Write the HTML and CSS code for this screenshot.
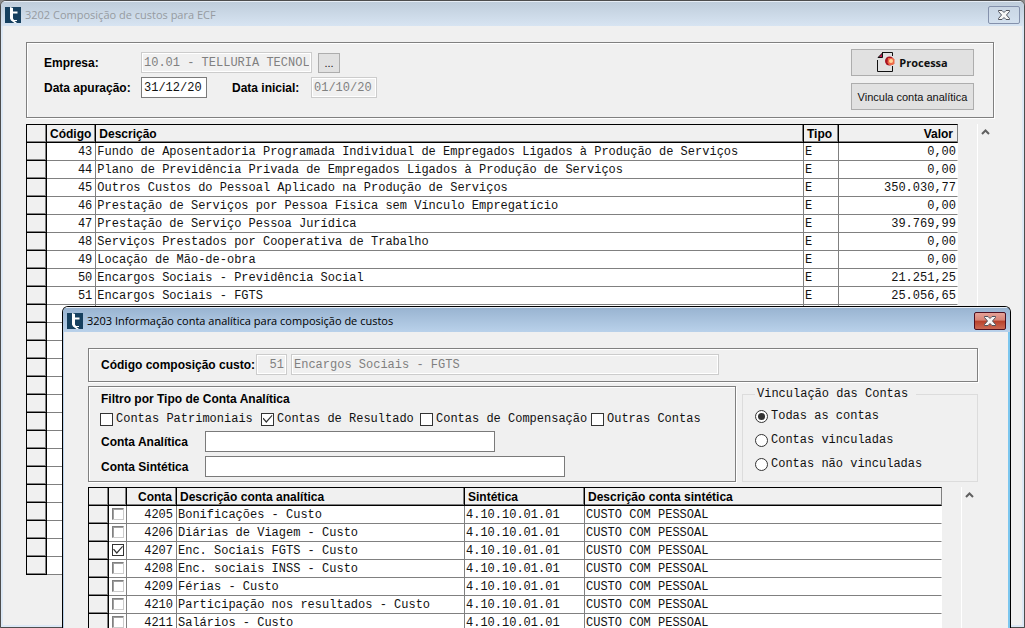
FILE: index.html
```html
<!DOCTYPE html>
<html lang="pt-BR">
<head>
<meta charset="utf-8">
<title>3202 Composição de custos para ECF</title>
<link rel="stylesheet" href="styles.css">
</head>
<body>
<svg class="defs" aria-hidden="true">
  <symbol id="logo" viewBox="0 0 16 16">
    <rect width="16" height="16" fill="#16405f"/>
    <path d="M5 0l3 1v3.500h4.500v2H8v5l1 1.500h3v1H9.500l2.500 2H9.500L6 13.500l-1-2z" fill="#fff"/>
  </symbol>
  <symbol id="close" viewBox="0 0 12 10">
    <path d="M.5.5h3.500L6 2.500 8 .5h3.500v1L8.500 5l3 3.500v1H8L6 7.500 4 9.500H.5v-1L3.500 5 .5 1.500z" fill="#f6f6f6" stroke="#50535c"/>
  </symbol>
  <symbol id="up" viewBox="0 0 9 6">
    <path d="M1 5 4.500 1.500 8 5" fill="none" stroke="#606060" stroke-width="2"/>
  </symbol>
</svg>
<main class="window">
  <header class="titlebar">
    <svg class="logo"><use href="#logo"/></svg>
    <h1 class="title">3202 Composição de custos para ECF</h1>
    <button class="close" aria-label="Fechar"><svg><use href="#close"/></svg></button>
  </header>
  <div class="content">
    <section class="panel company">
      <div class="fields">
        <div class="field">
          <label class="caption" for="empresa">Empresa:</label>
          <input class="box wide" id="empresa" value="10.01 - TELLURIA TECNOL" disabled>
          <button class="browse">...</button>
        </div>
        <div class="field">
          <label class="caption" for="apuracao">Data apuração:</label>
          <input class="box date" id="apuracao" value="31/12/20">
          <label class="caption second" for="inicial">Data inicial:</label>
          <input class="box date" id="inicial" value="01/10/20" disabled>
        </div>
      </div>
      <div class="actions">
        <button class="action strong">
          <svg class="process" viewBox="0 0 18 21"><path d="M5 .5h10.500V4M15.500 14v5.500H.5V8" fill="none" stroke="#111"/><path d="M1 5.500 5.500 1v4.500z" fill="#c2184b" stroke="#111"/><circle cx="12.500" cy="9" r="4.500" fill="#a81322"/><path d="M11 6h5l1.500 1.500v4L16 13h-4l-1.500-2.500z" fill="#ed6a48"/><circle cx="14" cy="9" r="2" fill="#ffd49a"/></svg>
          Processa
        </button>
        <button class="action">Vincula conta analítica</button>
      </div>
    </section>
    <div class="listing">
      <table class="grid costs">
        <colgroup><col class="c-mark"><col class="c-code"><col><col class="c-type"><col class="c-value"></colgroup>
        <thead><tr><th></th><th class="num">Código</th><th>Descrição</th><th>Tipo</th><th class="num">Valor</th></tr></thead>
        <tbody>
          <tr><td></td><td class="num">43</td><td>Fundo de Aposentadoria Programada Individual de Empregados Ligados à Produção de Serviços</td><td>E</td><td class="num">0,00</td></tr>
          <tr><td></td><td class="num">44</td><td>Plano de Previdência Privada de Empregados Ligados à Produção de Serviços</td><td>E</td><td class="num">0,00</td></tr>
          <tr><td></td><td class="num">45</td><td>Outros Custos do Pessoal Aplicado na Produção de Serviços</td><td>E</td><td class="num">350.030,77</td></tr>
          <tr><td></td><td class="num">46</td><td>Prestação de Serviços por Pessoa Física sem Vínculo Empregatício</td><td>E</td><td class="num">0,00</td></tr>
          <tr><td></td><td class="num">47</td><td>Prestação de Serviço Pessoa Jurídica</td><td>E</td><td class="num">39.769,99</td></tr>
          <tr><td></td><td class="num">48</td><td>Serviços Prestados por Cooperativa de Trabalho</td><td>E</td><td class="num">0,00</td></tr>
          <tr><td></td><td class="num">49</td><td>Locação de Mão-de-obra</td><td>E</td><td class="num">0,00</td></tr>
          <tr><td></td><td class="num">50</td><td>Encargos Sociais - Previdência Social</td><td>E</td><td class="num">21.251,25</td></tr>
          <tr><td></td><td class="num">51</td><td>Encargos Sociais - FGTS</td><td>E</td><td class="num">25.056,65</td></tr>
          <tr><td></td><td></td><td></td><td></td><td></td></tr>
          <tr><td></td><td></td><td></td><td></td><td></td></tr>
          <tr><td></td><td></td><td></td><td></td><td></td></tr>
          <tr><td></td><td></td><td></td><td></td><td></td></tr>
          <tr><td></td><td></td><td></td><td></td><td></td></tr>
          <tr><td></td><td></td><td></td><td></td><td></td></tr>
          <tr><td></td><td></td><td></td><td></td><td></td></tr>
          <tr><td></td><td></td><td></td><td></td><td></td></tr>
          <tr><td></td><td></td><td></td><td></td><td></td></tr>
          <tr><td></td><td></td><td></td><td></td><td></td></tr>
          <tr><td></td><td></td><td></td><td></td><td></td></tr>
          <tr><td></td><td></td><td></td><td></td><td></td></tr>
          <tr><td></td><td></td><td></td><td></td><td></td></tr>
          <tr><td></td><td></td><td></td><td></td><td></td></tr>
          <tr><td></td><td></td><td></td><td></td><td></td></tr>
        </tbody>
      </table>
      <div class="scroll"><button class="scroll-up" aria-label="Rolar para cima"><svg><use href="#up"/></svg></button></div>
    </div>
  </div>
</main>

<section class="window dialog" role="dialog" aria-labelledby="dialog-title">
  <header class="titlebar">
    <svg class="logo"><use href="#logo"/></svg>
    <h2 class="title" id="dialog-title">3203 Informação conta analítica para composição de custos</h2>
    <button class="close" aria-label="Fechar"><svg><use href="#close"/></svg></button>
  </header>
  <div class="content">
    <div class="panel composition">
      <label class="caption" for="codigo">Código composição custo:</label>
      <input class="box code num" id="codigo" value="51" disabled>
      <input class="box name" aria-label="Descrição da composição" value="Encargos Sociais - FGTS" disabled>
    </div>
    <div class="filters">
      <div class="panel filter">
        <h3 class="caption">Filtro por Tipo de Conta Analítica</h3>
        <div class="checks">
          <label class="option"><input class="tick" type="checkbox">Contas Patrimoniais</label>
          <label class="option"><input class="tick" type="checkbox" checked>Contas de Resultado</label>
          <label class="option"><input class="tick" type="checkbox">Contas de Compensação</label>
          <label class="option"><input class="tick" type="checkbox">Outras Contas</label>
        </div>
        <div class="field"><label class="caption" for="analitica">Conta Analítica</label><input class="box analytic" id="analitica"></div>
        <div class="field"><label class="caption" for="sintetica">Conta Sintética</label><input class="box synthetic" id="sintetica"></div>
      </div>
      <fieldset class="group">
        <legend class="legend">Vinculação das Contas</legend>
        <div class="radios">
          <label class="option"><input class="radio" type="radio" name="v" checked>Todas as contas</label>
          <label class="option"><input class="radio" type="radio" name="v">Contas vinculadas</label>
          <label class="option"><input class="radio" type="radio" name="v">Contas não vinculadas</label>
        </div>
      </fieldset>
    </div>
    <div class="listing">
      <table class="grid accounts">
        <colgroup><col class="c-mark"><col class="c-check"><col class="c-account"><col class="c-analytic"><col class="c-synthetic"><col></colgroup>
        <thead><tr><th></th><th></th><th class="num">Conta</th><th>Descrição conta analítica</th><th>Sintética</th><th>Descrição conta sintética</th></tr></thead>
        <tbody>
          <tr><td></td><td class="pick"><input class="tick sunken" type="checkbox" aria-label="4205"></td><td class="num">4205</td><td>Bonificações - Custo</td><td>4.10.10.01.01</td><td>CUSTO COM PESSOAL</td></tr>
          <tr><td></td><td class="pick"><input class="tick sunken" type="checkbox" aria-label="4206"></td><td class="num">4206</td><td>Diárias de Viagem - Custo</td><td>4.10.10.01.01</td><td>CUSTO COM PESSOAL</td></tr>
          <tr><td></td><td class="pick"><input class="tick sunken" type="checkbox" aria-label="4207" checked></td><td class="num">4207</td><td>Enc. Sociais FGTS - Custo</td><td>4.10.10.01.01</td><td>CUSTO COM PESSOAL</td></tr>
          <tr><td></td><td class="pick"><input class="tick sunken" type="checkbox" aria-label="4208"></td><td class="num">4208</td><td>Enc. sociais INSS - Custo</td><td>4.10.10.01.01</td><td>CUSTO COM PESSOAL</td></tr>
          <tr><td></td><td class="pick"><input class="tick sunken" type="checkbox" aria-label="4209"></td><td class="num">4209</td><td>Férias - Custo</td><td>4.10.10.01.01</td><td>CUSTO COM PESSOAL</td></tr>
          <tr><td></td><td class="pick"><input class="tick sunken" type="checkbox" aria-label="4210"></td><td class="num">4210</td><td>Participação nos resultados - Custo</td><td>4.10.10.01.01</td><td>CUSTO COM PESSOAL</td></tr>
          <tr><td></td><td class="pick"><input class="tick sunken" type="checkbox" aria-label="4211"></td><td class="num">4211</td><td>Salários - Custo</td><td>4.10.10.01.01</td><td>CUSTO COM PESSOAL</td></tr>
        </tbody>
      </table>
      <div class="scroll"><button class="scroll-up" aria-label="Rolar para cima"><svg><use href="#up"/></svg></button></div>
    </div>
  </div>
</section>
</body>
</html>
```

FILE: styles.css
```css
* { box-sizing: border-box; }
body {
  position: relative;
  height: 100vh;
  margin: 0;
  overflow: hidden;
  background: #8c8c8c;
  color: #111;
  font: 12px/16px "Liberation Mono", monospace;
}
input, button { font: inherit; color: inherit; margin: 0; }
h1, h2, h3 { margin: 0; }
.defs { position: absolute; width: 0; height: 0; }

/* windows */
.window {
  height: 100%;
  background: #f0f0f0;
  border: 1px solid #4d4d4d;
  border-radius: 6px 6px 0 0;
  box-shadow: inset 0 0 0 2px #dce8f5;
  overflow: hidden;
}
.titlebar {
  display: flex;
  align-items: center;
  height: 25px;
  padding: 1px 4px 0;
  gap: 4px;
  background: linear-gradient(#bfcddb, #d7e4f2);
  border-top: 1px solid #e6edf5;
}
.title {
  flex: 1;
  color: #969ba1;
  font: 11px/16px "Open Sans", sans-serif;
}
.logo { width: 16px; height: 16px; }
.close {
  display: flex;
  align-items: center;
  justify-content: center;
  width: 32px;
  height: 18px;
  padding: 0;
  background: linear-gradient(#c9d6e4, #d3e0ee);
  border: 1px solid #8491ac;
  border-radius: 2px;
}
.close svg { width: 12px; height: 10px; }
.content { padding: 16px 30px 0 25px; }

.dialog {
  position: absolute;
  top: 306px;
  right: 14px;
  bottom: 0;
  left: 62px;
  height: auto;
  border-color: #000;
  border-bottom: 0;
  box-shadow: inset 1px 0 #b9d1ea, inset -2px 0 #7cc6ee;
}
.dialog .titlebar { background: linear-gradient(#99b4d1, #b9d1ea); }
.dialog .title { color: #000; }
.dialog .close {
  background: linear-gradient(#e5a298, #d78476 45%, #b8412b 50%, #cb6a55);
  border-color: #4d1020;
}
.dialog .content { padding: 16px 32px 0 25px; }

/* panels and fields */
.panel {
  border: 1px solid #808080;
  box-shadow: inset 1px 1px #fff, 1px 1px #fff;
}
.caption {
  color: #000;
  font: bold 12px/16px "Liberation Sans", sans-serif;
  white-space: nowrap;
}
.box {
  height: 21px;
  padding: 0 2px;
  background: #fff;
  border: 1px solid #7a7a7a;
}
.box:disabled {
  color: #808080;
  background: #f0f0f0;
  border-color: #ccc;
  box-shadow: inset 0 0 0 1px #fff;
}
.num { text-align: right; }
.field { display: flex; align-items: center; }
.company {
  display: flex;
  justify-content: space-between;
  height: 76px;
  padding: 6px 19px 0 17px;
}
.fields { display: flex; flex-direction: column; gap: 4px; padding-top: 3px; }
.company .caption { width: 97px; }
.company .second { width: 79px; margin-left: 25px; }
.wide { width: 171px; }
.date { width: 66px; }
.browse, .action {
  background: #e1e1e1;
  border: 1px solid #adadad;
  font: 11px/12px "Liberation Sans", sans-serif;
}
.browse { width: 22px; height: 20px; margin-left: 6px; padding: 0; }
.actions { display: flex; flex-direction: column; gap: 7px; }
.action {
  display: flex;
  align-items: center;
  justify-content: center;
  gap: 4px;
  width: 123px;
  height: 27px;
  padding: 0;
  white-space: nowrap;
}
.strong { font: bold 11px/16px "Open Sans", sans-serif; }
.process { width: 18px; height: 21px; }

.composition { display: flex; padding: 5px 12px; }
.composition .caption { width: 155px; line-height: 22px; }
.code { width: 31px; margin-right: 4px; }
.name { width: 428px; }
.filters { display: flex; gap: 6px; margin-top: 4px; }
.filter {
  flex: 1;
  display: flex;
  flex-direction: column;
  gap: 4px;
  padding: 4px 12px;
}
.filter .field .caption { width: 104px; }
.checks { display: grid; grid-template-columns: 161px 159px 171px auto; margin-left: -1px; }
.option { display: flex; align-items: center; gap: 3px; white-space: nowrap; }
.analytic { width: 290px; }
.synthetic { width: 360px; }
.group {
  flex: 0 0 236px;
  margin: 0;
  padding: 6px 12px 0;
  border: 1px solid #dcdcdc;
}
.legend { padding: 0 8px 0 2px; }
.radios { display: flex; flex-direction: column; gap: 8px; }

.tick, .radio {
  flex: none;
  appearance: none;
  display: grid;
  place-items: center;
  width: 13px;
  height: 13px;
  background: #fff;
  border: 1px solid #333;
}
.radio { border-radius: 50%; }
.radio:checked::before {
  content: "";
  width: 7px;
  height: 7px;
  border-radius: 50%;
  background: #333;
}
.tick:checked::before {
  content: "";
  width: 10px;
  height: 8px;
  background: #333;
  clip-path: polygon(0 45%, 10% 35%, 38% 75%, 92% 0, 100% 10%, 38% 100%);
}
.tick.sunken {
  width: 12px;
  height: 12px;
  border-color: #808080 #ccc #ccc #808080;
  box-shadow: inset 1px 1px #a0a0a0;
}
.tick.sunken:checked { border-color: #333; box-shadow: none; }

/* tables */
.listing { display: flex; gap: 19px; margin-top: 6px; }
.dialog .listing { margin-top: 5px; }
.grid {
  flex: 1;
  min-width: 0;
  table-layout: fixed;
  border-collapse: separate;
  border-spacing: 0;
}
.grid th {
  height: 19px;
  padding: 1px 4px 0 3px;
  background: #f0f0f0;
  border: solid #000;
  border-width: 1px 1px 1px 0;
  box-shadow: inset -1px -1px #808080;
  color: #000;
  font: bold 12px/16px "Liberation Sans", sans-serif;
  text-align: left;
  white-space: nowrap;
}
.grid th.num { text-align: right; }
.grid th:last-child { border-right-color: #808080; box-shadow: inset 0 -1px #808080; }
.grid td {
  height: 18px;
  padding: 1px 2px 0 1px;
  background: #fff;
  border: solid #808080;
  border-width: 0 1px 1px 0;
  line-height: 16px;
  white-space: nowrap;
}
.grid td.num { padding-right: 3px; }
.grid td.num:last-child { padding-right: 1px; }
.grid td:last-child { border-right-color: #fff; }
.grid th:first-child, .grid td:first-child { border-left: 1px solid #000; }
.grid td:first-child {
  background: #f0f0f0;
  border-color: #000;
  box-shadow: inset -1px -1px #808080;
}
.grid td.pick { padding: 2px 0 0 3px; vertical-align: top; }
.pick .tick { display: grid; }
.c-mark { width: 21px; }
.c-code { width: 49px; }
.c-type { width: 35px; }
.c-value { width: 119px; }
.c-check { width: 18px; }
.c-account { width: 50px; }
.c-analytic { width: 288px; }
.c-synthetic { width: 120px; }
.scroll { width: 17px; border-left: 1px solid #fff; }
.scroll-up { display: flex; padding: 5px 3px; background: none; border: 0; }
.scroll-up svg { width: 9px; height: 6px; }
```
